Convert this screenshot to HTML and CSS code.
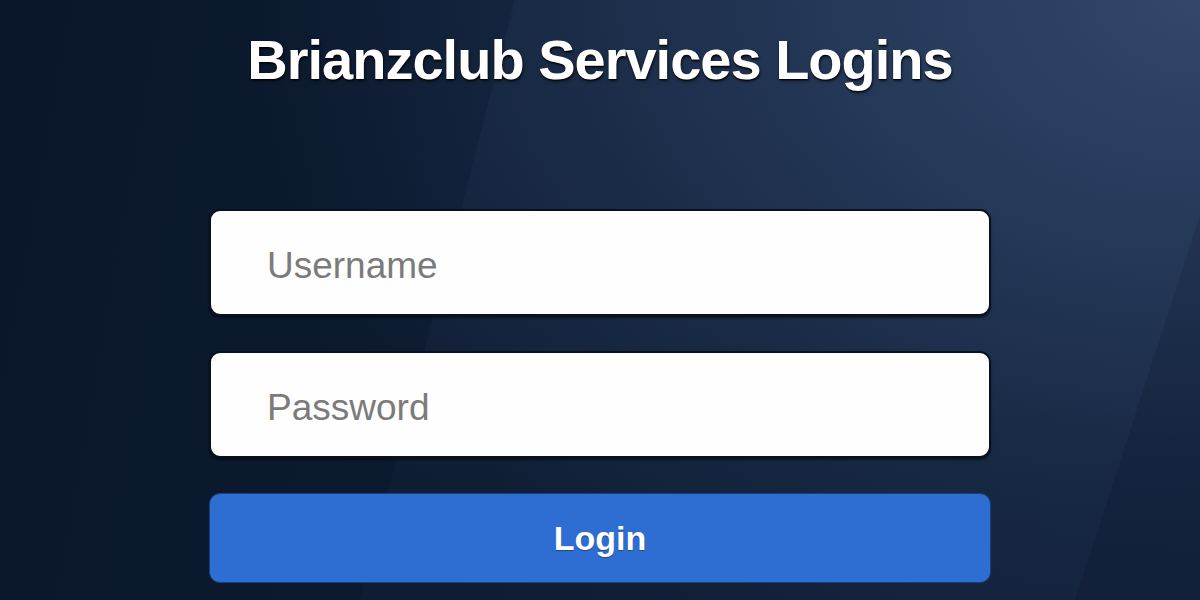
FILE: index.html
```html
<!DOCTYPE html>
<html lang="en">
<head>
<meta charset="utf-8">
<title>Brianzclub Services Logins</title>
<link rel="stylesheet" href="styles.css">
</head>
<body>
<div class="bg-band"></div>
<div class="bg-shade"></div>
<main class="page">
  <h1 class="title">Brianzclub Services Logins</h1>
  <form class="login-form">
    <input class="field" type="text" placeholder="Username">
    <input class="field" type="password" placeholder="Password">
    <button class="btn" type="button">Login</button>
  </form>
</main>
</body>
</html>
```

FILE: styles.css
```css
html, body {
  margin: 0;
  padding: 0;
  height: 100%;
}

body {
  width: 1200px;
  height: 600px;
  overflow: hidden;
  position: relative;
  font-family: "Liberation Sans", Arial, sans-serif;
  background:
    radial-gradient(ellipse 950px 720px at 100% 0%, #2f4466 0%, #213453 38%, #152640 68%, rgba(12, 26, 47, 0) 100%),
    linear-gradient(100deg, #0a172b 0%, #0c1a30 40%, #11213a 100%);
}

.bg-band {
  position: absolute;
  inset: 0;
  clip-path: polygon(515px 0, 1200px 0, 1200px 600px, 360px 600px);
  background: linear-gradient(160deg, rgba(120, 150, 200, 0.06) 0%, rgba(120, 150, 200, 0.03) 60%, rgba(120, 150, 200, 0.01) 100%);
  pointer-events: none;
}

.bg-shade {
  position: absolute;
  inset: 0;
  clip-path: polygon(1200px 215px, 1200px 600px, 1075px 600px);
  background: linear-gradient(180deg, rgba(5, 15, 35, 0.12), rgba(5, 15, 35, 0.22));
  pointer-events: none;
}

.page {
  position: relative;
  width: 782px;
  margin: 0 auto;
  padding-top: 26px;
  display: flex;
  flex-direction: column;
}

.title {
  margin: 0;
  height: 183px;
  text-align: center;
  color: #ffffff;
  font-size: 56px;
  font-weight: 700;
  line-height: 68px;
  letter-spacing: -1px;
  text-shadow: 0 1px 1px #000, 1px 2px 3px rgba(0, 0, 0, 0.6);
}

.login-form {
  display: flex;
  flex-direction: column;
  gap: 35px;
}

.field {
  box-sizing: border-box;
  height: 107px;
  width: 100%;
  margin: 0;
  padding: 6px 0 0 56px;
  border: 2px solid #08111f;
  border-radius: 11px;
  background: #fefefe;
  font-family: "Liberation Sans", Arial, sans-serif;
  font-size: 37px;
  color: #333;
  outline: none;
  box-shadow: 0 2px 2px rgba(0, 0, 0, 0.5);
}

.field::placeholder {
  color: #7b7b7b;
  opacity: 1;
}

.btn {
  box-sizing: border-box;
  height: 90px;
  width: 100%;
  margin: 0;
  border: 1px solid #1a3f7e;
  border-radius: 11px;
  background: #2e6dd2;
  color: #ffffff;
  font-family: "Liberation Sans", Arial, sans-serif;
  font-size: 34px;
  font-weight: 700;
  text-shadow: 0 1px 1px rgba(0, 0, 0, 0.35);
  cursor: pointer;
}
```
